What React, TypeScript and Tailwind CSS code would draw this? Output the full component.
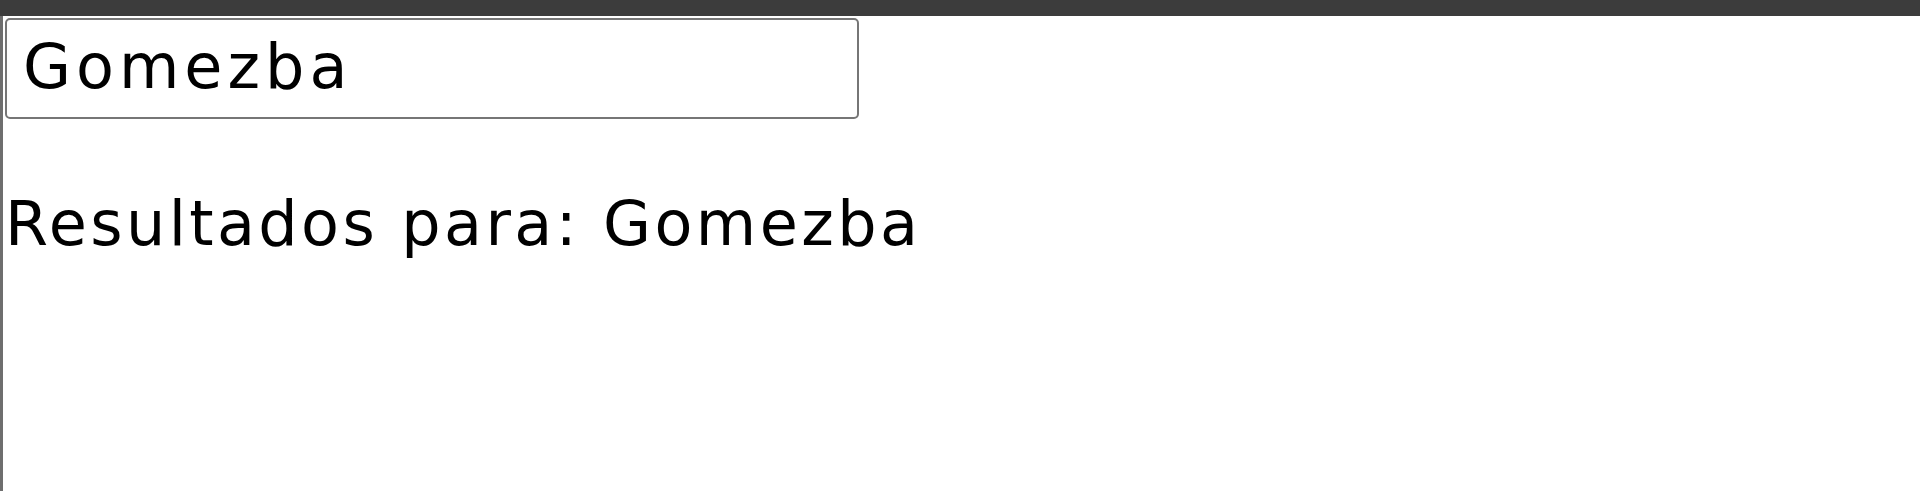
import * as React from 'react';

const FONT = "font-['DejaVu_Sans',_'Noto_Sans',_sans-serif]";

export default function App() {
  const [query, setQuery] = React.useState('Gomezba');

  return (
    <div className="flex flex-col w-[1920px] h-[491px] bg-white overflow-hidden">
      <div className="h-[16px] bg-[#3c3c3c] shrink-0" />
      <div className="flex flex-1 min-h-0">
        <div className="w-[3px] bg-[#6e6e6e] shrink-0" />
        <div className={`flex flex-col ${FONT} text-black tracking-[3.4px]`}>
          <input
            value={query}
            onChange={(e) => setQuery(e.target.value)}
            className="mt-[2px] ml-[2px] w-[854px] h-[101px] pl-[16px] pr-[16px] pb-[4px] border-2 border-[#767676] rounded-[5px] text-[62px] leading-none tracking-[5px] text-black outline-none"
          />
          <p className="mt-[65px] ml-[2px] text-[62px] leading-[80px] whitespace-nowrap">
            Resultados para: {query}
          </p>
        </div>
      </div>
    </div>
  );
}
